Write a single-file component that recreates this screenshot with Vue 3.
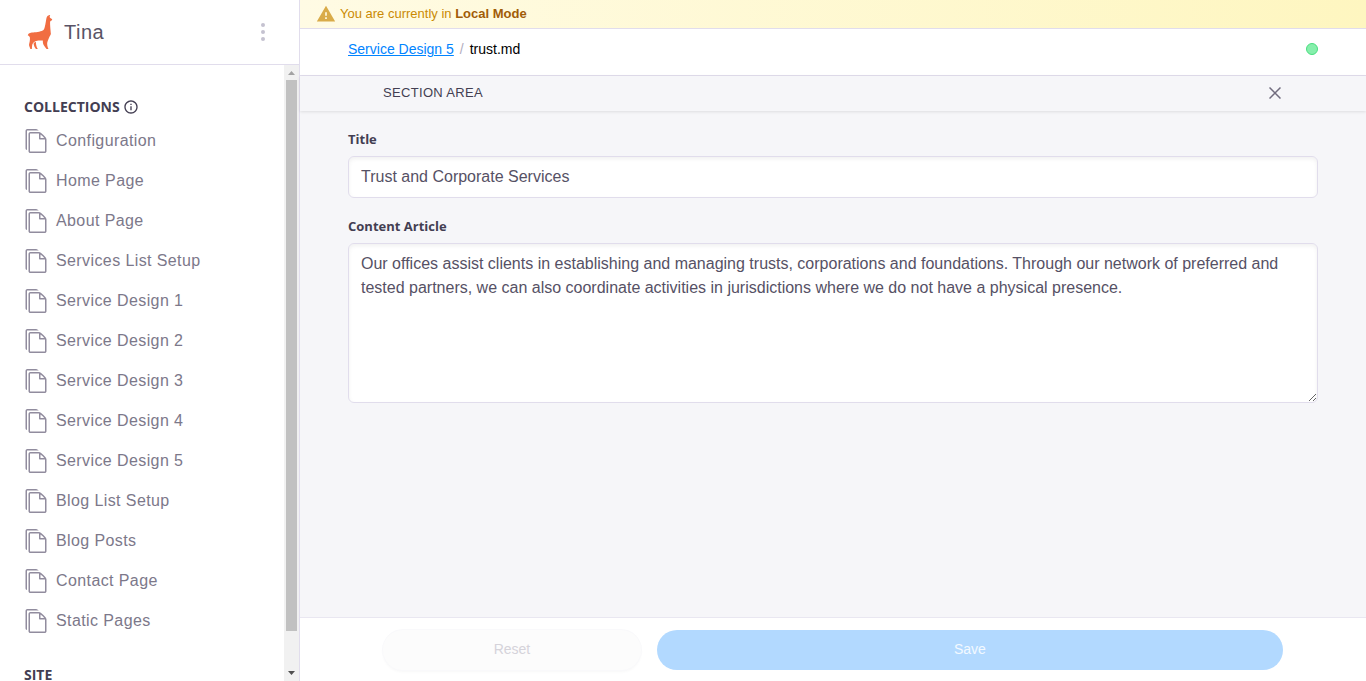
<script setup>
import { ref } from 'vue'

const collections = [
  'Configuration',
  'Home Page',
  'About Page',
  'Services List Setup',
  'Service Design 1',
  'Service Design 2',
  'Service Design 3',
  'Service Design 4',
  'Service Design 5',
  'Blog List Setup',
  'Blog Posts',
  'Contact Page',
  'Static Pages',
]

const title = ref('Trust and Corporate Services')
const article = ref(
  'Our offices assist clients in establishing and managing trusts, corporations and foundations. Through our network of preferred and tested partners, we can also coordinate activities in jurisdictions where we do not have a physical presence.'
)
</script>

<template>
  <div class="app">
    <aside class="sidebar">
      <header class="brand">
        <svg class="logo" viewBox="0 0 32 32" aria-hidden="true">
          <path d="M18.6466 14.5553C19.9018 13.5141 20.458 7.36086 21.0014 5.14903C21.5447 2.9372 23.7919 3.04938 23.7919 3.04938C23.7919 3.04938 23.2085 4.06764 23.4464 4.82751C23.6844 5.58738 25.3145 6.26662 25.3145 6.26662L24.9629 7.19622C24.9629 7.19622 24.2288 7.10204 23.7919 7.9785C23.355 8.85496 24.3392 17.4442 24.3392 17.4442C24.3392 17.4442 21.4469 22.7275 21.4469 24.9206C21.4469 27.1136 22.4819 28.9515 22.4819 28.9515H21.0296C21.0296 28.9515 18.899 26.4086 18.4626 25.1378C18.0263 23.8669 18.1993 22.596 18.1993 22.596C18.1993 22.596 15.8841 22.4711 13.8298 22.596C11.7755 22.7209 10.4035 24.4892 10.1559 25.4828C9.90826 26.4764 9.81054 28.9515 9.81054 28.9515H8.66784C7.97223 26.815 7.41797 26.1834 7.71888 25.1378C8.55307 22.2395 8.38743 20.5948 8.19386 19.8312C8.00029 19.0676 6.68945 18.3987 6.68945 18.3987C7.33231 17.0963 7.98856 16.4605 10.8191 16.3949C13.6497 16.3293 17.3914 15.5965 18.6466 14.5553Z" />
          <path d="M11.1268 24.7939C11.1268 24.7939 11.4236 27.5481 13.0001 28.9516H14.3511C13.0001 27.4166 12.8527 23.4155 12.8527 23.4155C12.1656 23.6399 11.3045 24.3846 11.1268 24.7939Z" />
        </svg>
        <span class="brand-name">Tina</span>
        <button class="menu" type="button" aria-label="Menu">
          <svg viewBox="0 0 4 18" width="4" height="18">
            <circle cx="2" cy="2" r="2" /><circle cx="2" cy="9" r="2" /><circle cx="2" cy="16" r="2" />
          </svg>
        </button>
      </header>
      <div class="side-body">
        <nav class="nav">
          <h2 class="heading">
            Collections
            <svg viewBox="0 0 24 24" width="16" height="16" aria-hidden="true">
              <path d="M12 2C6.486 2 2 6.486 2 12s4.486 10 10 10 10-4.486 10-10S17.514 2 12 2zm0 18c-4.411 0-8-3.589-8-8s3.589-8 8-8 8 3.589 8 8-3.589 8-8 8z" />
              <path d="M11 11h2v6h-2zm0-4h2v2h-2z" />
            </svg>
          </h2>
          <ul>
            <li v-for="name in collections" :key="name">
              <a href="#">
                <svg viewBox="0 0 16 16" width="24" height="24" aria-hidden="true">
                  <path d="M14.341 5.579c-0.347-0.473-0.831-1.027-1.362-1.558s-1.085-1.015-1.558-1.362c-0.806-0.591-1.197-0.659-1.421-0.659h-5.75c-0.689 0-1.25 0.561-1.25 1.25v11.5c0 0.689 0.561 1.25 1.25 1.25h9.5c0.689 0 1.25-0.561 1.25-1.25v-7.75c0-0.224-0.068-0.615-0.659-1.421zM12.271 4.729c0.48 0.48 0.856 0.912 1.134 1.271h-2.406v-2.405c0.359 0.278 0.792 0.654 1.271 1.134zM14 14.75c0 0.136-0.114 0.25-0.25 0.25h-9.5c-0.135 0-0.25-0.114-0.25-0.25v-11.5c0-0.135 0.114-0.25 0.25-0.25 0 0 5.749-0 5.75 0v3.5c0 0.276 0.224 0.5 0.5 0.5h3.5v7.75z" />
                  <path d="M9.421 0.659c-0.806-0.592-1.197-0.659-1.421-0.659h-5.75c-0.689 0-1.25 0.561-1.25 1.25v11.5c0 0.604 0.43 1.109 1 1.225v-12.725c0-0.135 0.115-0.25 0.25-0.25h7.607c-0.151-0.124-0.297-0.238-0.437-0.341z" />
                </svg>
                {{ name }}
              </a>
            </li>
          </ul>
          <h2 class="heading">Site</h2>
        </nav>
        <div class="scrollbar" aria-hidden="true">
          <svg viewBox="0 0 15 15" width="15" height="15"><path d="M4 10h7L7.500 6z" fill="#a3a3a3" /></svg>
          <div class="track"><div class="thumb"></div></div>
          <svg viewBox="0 0 15 15" width="15" height="15"><path d="M4 5h7L7.500 9z" fill="#505050" /></svg>
        </div>
      </div>
    </aside>

    <main class="main">
      <div class="notice">
        <svg viewBox="0 0 24 24" width="20" height="20" aria-hidden="true">
          <path d="M1 21h22L12 2 1 21zm12-3h-2v-2h2v2zm0-4h-2v-4h2v4z" />
        </svg>
        <span>You are currently in <b>Local Mode</b></span>
      </div>
      <div class="crumbs">
        <a href="#">Service Design 5</a>
        <span class="slash">/</span>
        <span>trust.md</span>
        <span class="status"></span>
      </div>
      <div class="section">
        <span>SECTION AREA</span>
        <button class="close" type="button" aria-label="Close">
          <svg viewBox="0 0 12 12" width="12" height="12"><path d="M.5.5l11 11M11.500.5L.5 11.500" /></svg>
        </button>
      </div>
      <form class="form" @submit.prevent>
        <label for="title">Title</label>
        <input id="title" v-model="title" type="text" />
        <label for="article">Content Article</label>
        <textarea id="article" v-model="article"></textarea>
      </form>
      <footer class="actions">
        <button class="reset" type="button" disabled>Reset</button>
        <button class="save" type="button" disabled>Save</button>
      </footer>
    </main>
  </div>
</template>

<style>
body {
  margin: 0;
}
</style>

<style scoped>
.app,
.app * {
  box-sizing: border-box;
}
.app {
  display: flex;
  height: 100vh;
  overflow: hidden;
  background: #fff;
  font-family: "Liberation Sans", Arial, sans-serif;
  font-size: 16px;
  line-height: 24px;
}
button {
  font-family: inherit;
  border: 0;
  padding: 0;
  background: none;
}
svg {
  display: block;
  flex: none;
}
.sidebar {
  display: flex;
  flex-direction: column;
  flex: none;
  width: 300px;
  border-right: 1px solid #e1ddec;
}
.brand {
  display: flex;
  align-items: center;
  flex: none;
  height: 65px;
  padding: 0 34px 0 19px;
  border-bottom: 1px solid #e1ddec;
}
.logo {
  width: 42px;
  height: 42px;
  fill: #f16d42;
}
.brand-name {
  margin-left: 3px;
  font-size: 20px;
  letter-spacing: 0.025em;
  color: #595466;
}
.menu {
  margin-left: auto;
  fill: #c5c2d0;
}
.side-body {
  display: flex;
  flex: 1;
  min-height: 0;
}
.nav {
  flex: 1;
  min-width: 0;
  overflow: hidden;
  padding: 32px 24px 0;
}
.heading {
  display: flex;
  align-items: center;
  gap: 3px;
  margin: 0;
  font-family: "Open Sans", "Noto Sans", sans-serif;
  font-size: 14px;
  line-height: 20px;
  font-weight: 700;
  text-transform: uppercase;
  color: #433e52;
}
.heading svg {
  fill: #433e52;
}
ul {
  margin: 4px 0 24px;
  padding: 0;
  list-style: none;
}
li a {
  display: flex;
  align-items: center;
  gap: 8px;
  height: 40px;
  letter-spacing: 0.025em;
  text-decoration: none;
  color: #7c788a;
}
li svg {
  fill: #918c9e;
}
.scrollbar {
  display: flex;
  flex-direction: column;
  flex: none;
  width: 15px;
  background: #f1f1f1;
}
.track {
  flex: 1;
  padding: 0 2px;
}
.thumb {
  height: 94%;
  background: #c1c1c1;
}
.main {
  display: flex;
  flex-direction: column;
  flex: 1;
  min-width: 0;
}
.notice {
  display: flex;
  align-items: center;
  gap: 4px;
  flex: none;
  height: 29px;
  padding: 0 16px;
  border-bottom: 1px solid #e1ddec;
  background: linear-gradient(to right, #fffbe4, #fef6c0);
  font-size: 13px;
  color: #ca8a04;
}
.notice svg {
  fill: #d9ab48;
}
.notice b {
  color: #a15c07;
}
.crumbs {
  display: flex;
  align-items: center;
  flex: none;
  height: 47px;
  padding: 0 48px 6px;
  border-bottom: 1px solid #e1ddec;
  font-size: 14px;
  color: #000;
}
.crumbs a {
  color: #0084ff;
  text-decoration: underline;
}
.slash {
  margin: 0 6px;
  color: #b2adbe;
}
.status {
  width: 12px;
  height: 12px;
  margin-left: auto;
  border: 1px solid #4ade80;
  border-radius: 50%;
  background: #86efac;
}
.section {
  display: flex;
  align-items: center;
  justify-content: space-between;
  flex: none;
  height: 35px;
  padding: 0 85px 2px 83px;
  background: #f6f6f9;
  box-shadow: 0 1px 3px rgba(0, 0, 0, 0.1);
  font-size: 13px;
  letter-spacing: 0.025em;
  color: #433e52;
  z-index: 1;
}
.close svg {
  fill: none;
  stroke: #716c7f;
  stroke-width: 1.5;
}
.form {
  flex: 1;
  min-height: 0;
  padding: 18px 48px;
  background: #f6f6f9;
}
label {
  display: block;
  margin-bottom: 7px;
  font-family: "Open Sans", "Noto Sans", sans-serif;
  font-size: 13px;
  line-height: 20px;
  font-weight: 700;
  color: #433e52;
}
input,
textarea {
  display: block;
  width: 100%;
  margin: 0 0 18px;
  padding: 8px 12px;
  border: 1px solid #e1ddec;
  border-radius: 6px;
  background: #fff;
  box-shadow: inset 0 2px 4px rgba(0, 0, 0, 0.06);
  font: inherit;
  color: #565165;
}
input {
  height: 42px;
}
textarea {
  height: 160px;
  resize: vertical;
}
.actions {
  display: flex;
  gap: 16px;
  flex: none;
  height: 64px;
  padding: 12px 83px 11px;
  border-top: 1px solid #e9e7f1;
}
.actions button {
  height: 40px;
  padding-bottom: 2px;
  border-radius: 20px;
  font-size: 14px;
}
.reset {
  flex: 7 1 0;
  background: #fcfcfc;
  box-shadow: 0 0 0 1px #f9f9fb, 0 2px 3px rgba(0, 0, 0, 0.03);
  color: #d5d3da;
}
.save {
  flex: 17 1 0;
  background: #b2d9ff;
  color: #f3f9ff;
}
</style>
